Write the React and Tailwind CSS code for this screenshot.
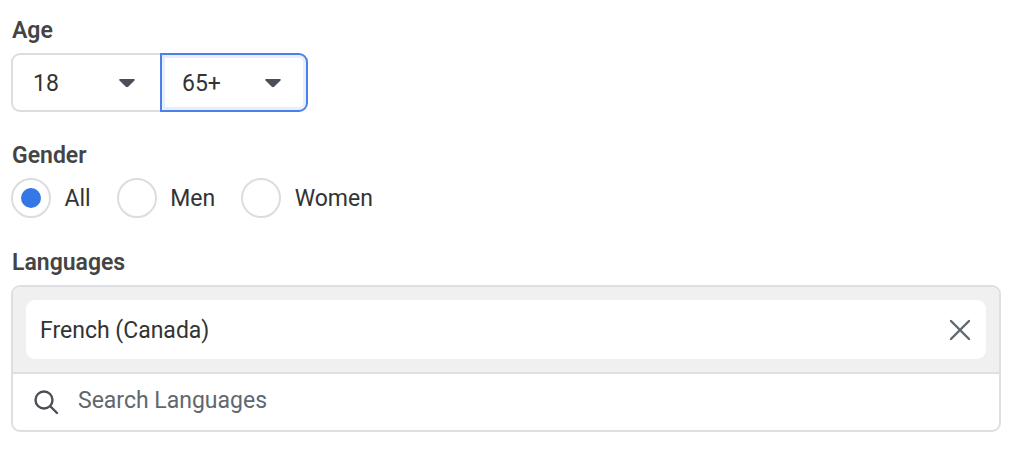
import React from "react";

const Caret = () => (
  <svg width="16" height="10" viewBox="0 0 16 10" className="shrink-0">
    <path d="M1.2 1h13.6c.9 0 1.3 1 .7 1.6L9.2 8.7c-.7.6-1.7.6-2.4 0L.5 2.6C-.1 2 .3 1 1.2 1z" fill="#4b4f56" />
  </svg>
);

const Radio = ({ label, checked }) => (
  <label className="flex items-center">
    <span className="flex items-center justify-center w-[40px] h-[40px] rounded-full border-2 border-[#dddddd] bg-white">
      {checked && <span className="w-[20px] h-[20px] rounded-full bg-[#3578e5]" />}
    </span>
    <span className="ml-[13.5px] pt-[2px] text-[23px] leading-[28px] text-[#333333]">{label}</span>
  </label>
);

export default function App() {
  return (
    <div
      className="w-[1024px] h-[458px] bg-white px-[11px] pt-[17px] overflow-hidden"
      style={{ fontFamily: "Roboto, sans-serif" }}
    >
      <h3 className="pl-[1px] text-[23px] leading-[28px] font-semibold text-[#444444]">Age</h3>
      <div className="flex mt-[8px] w-[297px] h-[59px] text-[23px] text-[#333333]">
        <div className="flex items-center justify-between w-[149px] pl-[20px] pr-[25px] border-2 border-r-0 border-[#dddddd] rounded-l-[9px]">
          <span className="pt-[4px]">18</span>
          <Caret />
        </div>
        <div className="flex items-center justify-between w-[148px] pl-[20px] pr-[25px] border-2 border-[#4a80e8] rounded-r-[9px] shadow-[inset_0_0_0_3px_#e7eefc]">
          <span className="pt-[4px]">65+</span>
          <Caret />
        </div>
      </div>

      <h3 className="mt-[30px] pl-[1px] text-[23px] leading-[28px] font-semibold text-[#444444]">Gender</h3>
      <div className="flex gap-[26px] mt-[8px]">
        <Radio label="All" checked />
        <Radio label="Men" />
        <Radio label="Women" />
      </div>

      <h3 className="mt-[31px] pl-[1px] text-[23px] leading-[28px] font-semibold text-[#444444]">Languages</h3>
      <div className="mt-[8px] w-[990px] h-[147px] border-2 border-[#dddfe2] rounded-[9px] overflow-hidden">
        <div className="h-[87px] bg-[#f0f0f0] border-b-2 border-[#dddfe2] px-[13px] pt-[13px]">
          <div className="flex items-center justify-between h-[59px] bg-white rounded-[9px] pl-[14px] pr-[14px]">
            <span className="pt-[4px] text-[23px] text-[#333333]">French (Canada)</span>
            <svg width="24" height="24" viewBox="0 0 24 24" fill="none" stroke="#606770" strokeWidth="2.4" strokeLinecap="round">
              <path d="M3 3l18 18M21 3L3 21" />
            </svg>
          </div>
        </div>
        <div className="flex items-center h-[56px] pl-[20px]">
          <svg width="26" height="26" viewBox="0 0 26 26" fill="none" stroke="#4b4f56" strokeWidth="2.4" strokeLinecap="round">
            <circle cx="11" cy="11" r="8.5" />
            <path d="M17.5 17.5L24 24" />
          </svg>
          <span className="ml-[19px] pb-[2px] text-[23px] text-[#606770]">Search Languages</span>
        </div>
      </div>
    </div>
  );
}
